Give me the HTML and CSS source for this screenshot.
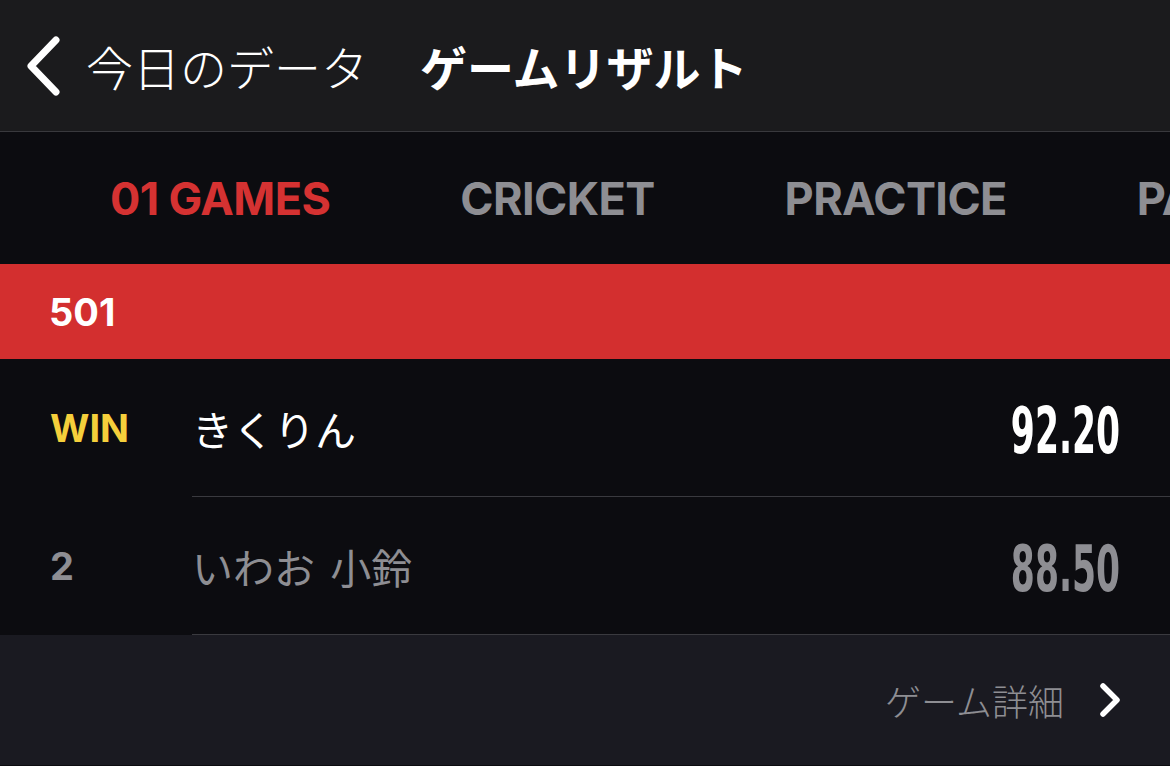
FILE: index.html
```html
<!DOCTYPE html>
<html lang="ja">
<head>
    <meta charset="UTF-8">
    <meta name="viewport" content="width=device-width, initial-scale=1.0">
    <title>ゲームリザルト</title>
    <link rel="stylesheet" href="styles.css">
</head>
<body>
    <header class="nav-bar">
        <a class="back" href="#">
            <svg class="back-icon" width="40" height="60" viewBox="0 0 40 60">
                <polyline points="32,4 7,30 32,56" fill="none" stroke="#fff" stroke-width="7" stroke-linecap="round" stroke-linejoin="round"/>
            </svg>
            <span class="back-label">今日のデータ</span>
        </a>
        <h1 class="nav-title">ゲームリザルト</h1>
    </header>

    <nav class="tabs">
        <span class="tab active">01 GAMES</span>
        <span class="tab">CRICKET</span>
        <span class="tab">PRACTICE</span>
        <span class="tab">PARTY</span>
    </nav>

    <div class="game-head">501</div>

    <div class="result-row">
        <div class="rank win">WIN</div>
        <div class="result-main">
            <span class="player">きくりん</span>
            <span class="score"><span class="score-num">92.20</span></span>
        </div>
    </div>
    <div class="result-row muted">
        <div class="rank">2</div>
        <div class="result-main">
            <span class="player">いわお 小鈴</span>
            <span class="score"><span class="score-num">88.50</span></span>
        </div>
    </div>

    <footer class="detail-link">
        <span class="detail-label">ゲーム詳細</span>
        <svg class="detail-icon" width="24" height="36" viewBox="0 0 24 36">
            <polyline points="5,4 19,18 5,32" fill="none" stroke="#fff" stroke-width="5.5" stroke-linecap="round" stroke-linejoin="round"/>
        </svg>
    </footer>
</body>
</html>
```

FILE: styles.css
```css
body { margin: 0; width: 1170px; height: 766px; overflow: hidden; background-color: #0c0c10; color: #fff; font-family: Inter, "Noto Sans CJK JP", sans-serif; }

.nav-bar { height: 131px; display: flex; align-items: center; padding-left: 24px; background-color: #1b1b1d; border-bottom: 1px solid #39393d; box-sizing: content-box; }
.back { display: flex; align-items: center; color: #fff; text-decoration: none; }
.back-icon { display: block; margin-right: 22px; }
.back-label { font-family: "Noto Sans CJK JP", sans-serif; font-size: 47px; font-weight: 300; }
.nav-title { margin: 0 0 0 52px; font-family: "Noto Sans CJK JP", sans-serif; font-size: 47px; font-weight: 700; }

.tabs { height: 132px; display: flex; align-items: center; padding-left: 45px; white-space: nowrap; overflow: hidden; }
.tab { flex-shrink: 0; padding: 0 65px; font-size: 45px; font-weight: 700; color: #8e8e93; letter-spacing: -0.6px; }
.tab.active { color: #d53232; }

.game-head { height: 95px; display: flex; align-items: center; padding-left: 49px; background-color: #d32f2f; font-size: 38px; font-weight: 700; }

.result-row { display: flex; padding-left: 50px; }
.rank { width: 142px; display: flex; align-items: center; font-size: 38px; font-weight: 700; color: #8e8e93; }
.rank.win { color: #f5cf3b; }
.result-main { flex: 1; height: 138px; display: flex; align-items: center; justify-content: space-between; padding-right: 50px; border-bottom: 1px solid #3a3a3f; box-sizing: border-box; }
.player { font-family: "Noto Sans CJK JP", sans-serif; font-size: 41px; font-weight: 400; word-spacing: 6px; }
.score { display: flex; justify-content: flex-end; width: 110px; }
.score-num { display: inline-block; font-family: "DejaVu Sans", sans-serif; font-stretch: condensed; font-size: 64px; font-weight: 700; transform: scaleX(0.6); transform-origin: right center; margin-top: 6px; }
.muted .player, .muted .score { color: #8e8e93; }

.detail-link { height: 130px; display: flex; align-items: center; justify-content: flex-end; padding-right: 48px; background-color: #1a1a21; }
.detail-label { font-family: "Noto Sans CJK JP", sans-serif; font-size: 36px; font-weight: 300; color: #8e8e93; margin-right: 34px; }
.detail-icon { display: block; }
```
